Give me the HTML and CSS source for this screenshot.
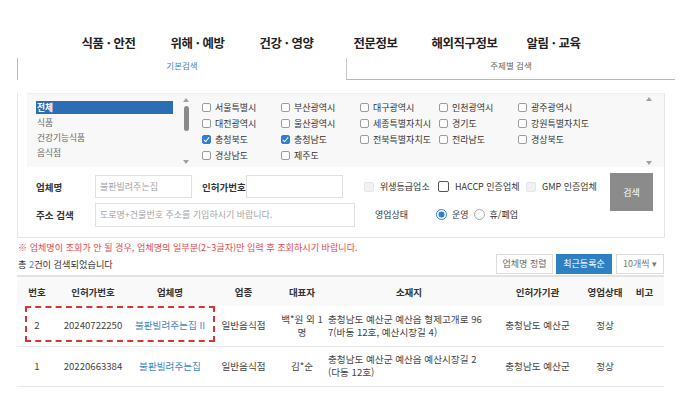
FILE: index.html
```html
<!DOCTYPE html>
<html lang="ko">
<head>
<meta charset="utf-8">
<title>업소 검색</title>
<link rel="stylesheet" href="styles.css">
</head>
<body>
<header class="gnb">
  <a href="#">식품 · 안전</a>
  <a href="#">위해 · 예방</a>
  <a href="#">건강 · 영양</a>
  <a href="#">전문정보</a>
  <a href="#">해외직구정보</a>
  <a href="#">알림 · 교육</a>
</header>

<main>
  <div class="tabs">
    <div class="tab active">기본검색</div>
    <div class="tab other">주제별 검색</div>
  </div>

  <section class="search-panel">
    <div class="filter-box">
      <div class="category-list">
        <ul>
          <li class="selected">전체</li>
          <li>식품</li>
          <li>건강기능식품</li>
          <li>음식점</li>
        </ul>
        <div class="scrollbar">
          <span class="arrow up"></span>
          <span class="thumb"></span>
          <span class="arrow down"></span>
        </div>
      </div>

      <div class="region-grid">
        <label class="opt"><span class="chk"></span>서울특별시</label>
        <label class="opt"><span class="chk"></span>부산광역시</label>
        <label class="opt"><span class="chk"></span>대구광역시</label>
        <label class="opt"><span class="chk"></span>인천광역시</label>
        <label class="opt"><span class="chk"></span>광주광역시</label>
        <label class="opt"><span class="chk"></span>대전광역시</label>
        <label class="opt"><span class="chk"></span>울산광역시</label>
        <label class="opt"><span class="chk"></span>세종특별자치시</label>
        <label class="opt"><span class="chk"></span>경기도</label>
        <label class="opt"><span class="chk"></span>강원특별자치도</label>
        <label class="opt"><span class="chk on"></span>충청북도</label>
        <label class="opt"><span class="chk on"></span>충청남도</label>
        <label class="opt"><span class="chk"></span>전북특별자치도</label>
        <label class="opt"><span class="chk"></span>전라남도</label>
        <label class="opt"><span class="chk"></span>경상북도</label>
        <label class="opt"><span class="chk"></span>경상남도</label>
        <label class="opt"><span class="chk"></span>제주도</label>
      </div>

      <div class="scrollbar plain">
        <span class="arrow up"></span>
        <span class="arrow down"></span>
      </div>
    </div>

    <div class="search-form">
      <div class="form-rows">
        <div class="field-row">
          <span class="lbl">업체명</span>
          <input class="inp inp-name" type="text" value="불판빌려주는집">
          <span class="lbl lbl-license">인허가번호</span>
          <input class="inp inp-license" type="text">
          <div class="cert-group">
            <label class="cert cert-hygiene"><span class="chk off"></span>위생등급업소</label>
            <label class="cert cert-haccp"><span class="chk big"></span>HACCP 인증업체</label>
            <label class="cert"><span class="chk off"></span>GMP 인증업체</label>
          </div>
        </div>
        <div class="field-row">
          <span class="lbl">주소 검색</span>
          <input class="inp inp-addr" type="text" placeholder="도로명+건물번호 주소를 기입하시기 바랍니다.">
          <span class="lbl-status">영업상태</span>
          <label class="radio-opt"><span class="radio on"></span>운영</label>
          <label class="radio-opt"><span class="radio"></span>휴/폐업</label>
        </div>
      </div>
      <button class="btn-search" type="button">검색</button>
    </div>
  </section>

  <p class="notice">※ 업체명이 조회가 안 될 경우, 업체명의 일부분(2~3글자)만 입력 후 조회하시기 바랍니다.</p>

  <div class="result-bar">
    <p class="count">총 <em>2</em>건이 검색되었습니다</p>
    <div class="sort">
      <button class="btn" type="button">업체명 정렬</button>
      <button class="btn current" type="button">최근등록순</button>
      <span class="btn per-page">10개씩 ▾</span>
    </div>
  </div>

  <div class="table-wrap">
    <table class="result">
      <colgroup>
        <col class="c-no"><col class="c-license"><col class="c-name"><col class="c-type">
        <col class="c-rep"><col class="c-addr"><col class="c-org"><col class="c-state"><col class="c-note">
      </colgroup>
      <thead>
        <tr>
          <th>번호</th><th>인허가번호</th><th>업체명</th><th>업종</th><th>대표자</th>
          <th>소재지</th><th>인허가기관</th><th>영업상태</th><th>비고</th>
        </tr>
      </thead>
      <tbody>
        <tr>
          <td>2</td>
          <td>20240722250</td>
          <td><a class="biz" href="#">불판빌려주는집 II</a></td>
          <td>일반음식점</td>
          <td>백*원 외 1<br>명</td>
          <td class="addr">충청남도 예산군 예산읍 형제고개로 96<br>7(바동 12호, 예산시장길 4)</td>
          <td>충청남도 예산군</td>
          <td>정상</td>
          <td></td>
        </tr>
        <tr>
          <td>1</td>
          <td>20220663384</td>
          <td><a class="biz" href="#">불판빌려주는집</a></td>
          <td>일반음식점</td>
          <td>김*순</td>
          <td class="addr">충청남도 예산군 예산읍 예산시장길 2<br>(다동 12호)</td>
          <td>충청남도 예산군</td>
          <td>정상</td>
          <td></td>
        </tr>
      </tbody>
    </table>
    <div class="mark"></div>
  </div>
</main>
</body>
</html>
```

FILE: styles.css
```css
* {
  box-sizing: border-box;
  margin: 0;
  padding: 0;
}

body {
  width: 686px;
  height: 414px;
  overflow: hidden;
  background: #fff;
  color: #333;
  font-family: "Noto Sans CJK KR", "Noto Sans", sans-serif;
}

/* top navigation */
.gnb {
  display: flex;
  height: 58px;
  padding: 34px 0 0 64px;
}

.gnb a {
  width: 89px;
  text-align: center;
  font-size: 12.4px;
  line-height: 18px;
  font-weight: 700;
  letter-spacing: -0.4px;
  color: #222;
  text-decoration: none;
}

/* search tabs */
.tabs {
  display: flex;
  width: 658px;
  height: 22px;
  margin-left: 17px;
}

.tab {
  font-size: 8.5px;
  line-height: 15px;
  text-align: center;
}

.tab.active {
  width: 329px;
  border-left: 1px solid #a8bfcc;
  color: #3689c9;
}

.tab.other {
  flex: 1;
  border-left: 1px solid #c8c8c8;
  border-bottom: 1px solid #b8b8b8;
  color: #666;
}

/* search panel */
.search-panel {
  width: 648px;
  margin-left: 17px;
  border: 1px solid #e6e6e6;
  border-top: none;
}

.filter-box {
  display: flex;
  height: 74px;
  margin: 13px 0 0 9px;
  background: #f8f8f8;
  border-top: 1px solid #eeeeee;
}

.category-list {
  display: flex;
  padding: 3px 0 0 9px;
}

.category-list ul {
  width: 137px;
  padding-top: 3px;
  list-style: none;
}

.category-list li {
  height: 15px;
  padding-left: 1px;
  font-size: 8.7px;
  line-height: 15px;
  color: #666;
}

.category-list li.selected {
  height: 13px;
  margin: 1px 0;
  line-height: 13px;
  background: #2c6db3;
  color: #fff;
  font-weight: 700;
}

.scrollbar {
  display: flex;
  flex-direction: column;
  align-items: center;
  width: 6px;
  height: 66px;
  margin: 1px 0 0 10px;
}

.arrow {
  width: 0;
  height: 0;
  border-left: 3px solid transparent;
  border-right: 3px solid transparent;
}

.arrow.up {
  border-bottom: 4px solid #a0a0a0;
}

.arrow.down {
  margin-top: auto;
  border-top: 4px solid #a0a0a0;
}

.thumb {
  width: 5px;
  height: 25px;
  margin-top: 4px;
  border-radius: 3px;
  background: #8a8a8a;
}

.scrollbar.plain {
  height: 68px;
  margin: 3px 12px 0 auto;
}

.region-grid {
  display: grid;
  grid-template-columns: repeat(5, 79px);
  grid-auto-rows: 16px;
  margin-left: 13px;
  padding-top: 5px;
}

.opt {
  display: flex;
  align-items: center;
  gap: 4px;
  font-size: 9px;
  color: #333;
  white-space: nowrap;
}

/* checkbox and radio glyphs */
.chk {
  position: relative;
  flex: none;
  width: 9px;
  height: 9px;
  border: 1px solid #9c9c9c;
  border-radius: 2px;
  background: #fff;
}

.chk.on {
  border-color: #2d7fd8;
  background: #2d7fd8;
}

.chk.on::after {
  content: "";
  position: absolute;
  left: 2px;
  top: 0;
  width: 2px;
  height: 5px;
  border-right: 1.3px solid #fff;
  border-bottom: 1.3px solid #fff;
  transform: rotate(40deg);
}

.chk.off {
  width: 10px;
  height: 10px;
  border-color: #e6e6e6;
  background: #f1f1f1;
}

.chk.big {
  width: 11px;
  height: 11px;
  border-color: #555;
}

.radio {
  flex: none;
  width: 11px;
  height: 11px;
  border: 1px solid #aaa;
  border-radius: 50%;
  background: #fff;
}

.radio.on {
  border-color: #2d7fd8;
  background: radial-gradient(circle, #2d7fd8 0 2.8px, #fff 3.3px);
}

/* search form */
.search-form {
  display: flex;
  align-items: flex-start;
  padding: 6px 0 11px 18px;
}

.form-rows {
  display: flex;
  flex-direction: column;
  gap: 5px;
  padding-top: 2px;
}

.field-row {
  display: flex;
  align-items: center;
  height: 23px;
}

.lbl {
  width: 59px;
  font-size: 9.5px;
  font-weight: 700;
  color: #333;
}

.lbl-license {
  width: 44px;
  margin-left: 10px;
}

.inp {
  height: 23px;
  padding-left: 4px;
  border: 1px solid #e0e0e0;
  outline: none;
  background: #fff;
  font-family: "Noto Sans CJK KR", "Noto Sans", sans-serif;
  font-size: 9px;
  color: #a5a5a5;
}

.inp::placeholder {
  color: #a5a5a5;
}

.inp-name,
.inp-license {
  width: 97px;
}

.inp-addr {
  width: 260px;
  height: 24px;
}

.cert-group {
  display: flex;
  align-items: center;
  margin-left: 21px;
}

.cert {
  display: flex;
  align-items: center;
  gap: 6px;
  font-size: 9px;
  color: #333;
  white-space: nowrap;
}

.cert-hygiene {
  width: 74px;
}

.cert-haccp {
  width: 88px;
}

.lbl-status {
  width: 61px;
  margin-left: 20px;
  font-size: 9px;
  color: #333;
}

.radio-opt {
  display: flex;
  align-items: center;
  gap: 5px;
  margin-right: 5px;
  font-size: 9px;
  color: #333;
}

.btn-search {
  width: 43px;
  height: 38px;
  margin: 0 11px 0 auto;
  border: none;
  background: #8b8b8b;
  color: #fff;
  font-family: inherit;
  font-size: 9px;
}

/* notice and result count */
.notice {
  margin: 3px 0 0 18px;
  font-size: 9.1px;
  line-height: 12px;
  color: #e4474b;
}

.result-bar {
  display: flex;
  align-items: center;
  justify-content: space-between;
  width: 647px;
  height: 23px;
  margin: 1px 0 0 17px;
  padding-bottom: 2px;
  border-bottom: 2px solid #e2e2e2;
}

.count {
  padding-left: 1px;
  font-size: 9.2px;
  color: #333;
}

.count em {
  font-style: normal;
  color: #3a87c7;
}

.sort {
  display: flex;
  gap: 3px;
}

.btn {
  display: flex;
  align-items: center;
  justify-content: center;
  height: 20px;
  border: 1px solid #dcdcdc;
  background: #fff;
  color: #666;
  font-family: inherit;
  font-size: 9px;
}

.sort .btn:first-child {
  width: 57px;
}

.btn.current {
  width: 56px;
  border-color: #2f80c2;
  background: #2f80c2;
  color: #fff;
}

.btn.per-page {
  width: 48px;
  margin-left: 1px;
  color: #777;
}

/* result table */
.table-wrap {
  position: relative;
  width: 647px;
  margin-left: 17px;
}

.result {
  width: 647px;
  border-collapse: collapse;
  table-layout: fixed;
}

.c-no { width: 40px; }
.c-license { width: 72px; }
.c-name { width: 82px; }
.c-type { width: 65px; }
.c-rep { width: 52px; }
.c-addr { width: 162px; }
.c-org { width: 95px; }
.c-state { width: 40px; }
.c-note { width: 39px; }

.result th {
  height: 29px;
  background: #f9f9f9;
  font-size: 9.5px;
  font-weight: 700;
  color: #333;
}

.result td {
  height: 40px;
  border-bottom: 1px solid #e8e8e8;
  text-align: center;
  font-size: 9.6px;
  line-height: 13px;
  color: #444;
}

.result td.addr {
  text-align: left;
}

.biz {
  color: #3a87c7;
  text-decoration: none;
}

/* dashed outline around the newest entry */
.mark {
  position: absolute;
  left: 8px;
  top: 29px;
  width: 190px;
  height: 36px;
  border: 2px dashed #d7372f;
}
```
